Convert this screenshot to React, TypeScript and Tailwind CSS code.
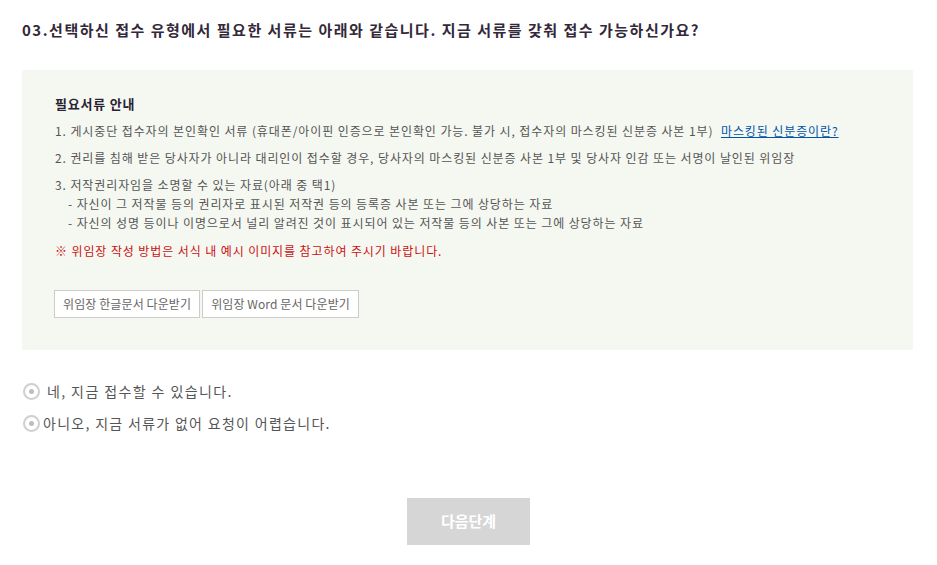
import React from "react";

const font = { fontFamily: '"Noto Sans CJK KR", "Noto Sans", sans-serif' };

function Radio({ label, gap, track }: { label: string; gap: string; track: string }) {
  return (
    <div className={`flex items-center ${gap}`}>
      <span className="flex h-[17px] w-[17px] items-center justify-center rounded-full border-2 border-[#cfcfcf] bg-white">
        <span className="h-[5px] w-[5px] rounded-full bg-[#bdbdbd]" />
      </span>
      <span className={`text-[14px] text-[#555] ${track}`}>{label}</span>
    </div>
  );
}

export default function App() {
  return (
    <div className="w-[937px] h-[565px] bg-white" style={font}>
      <div className="px-[22px] pt-[19px]">
        <h2 className="text-[15px] font-bold leading-[22px] text-[#33293a] tracking-[1.5px]">
          03.선택하신 접수 유형에서 필요한 서류는 아래와 같습니다. 지금 서류를 갖춰 접수 가능하신가요?
        </h2>
        <div className="mt-[29px] h-[280px] w-[891px] bg-[#f4f8f1] pl-[33px] pt-[25px]">
          <div className="text-[13px] font-bold leading-[18px] text-[#2a2233] tracking-[0.8px]">필요서류 안내</div>
          <div className="mt-[9px] text-[12px] leading-[18px] text-[#555] tracking-[0.9px]">
            <p>
              1. 게시중단 접수자의 본인확인 서류 (휴대폰/아이핀 인증으로 본인확인 가능. 불가 시, 접수자의 마스킹된 신분증 사본 1부){" "}
              <a className="ml-[4px] text-[#0055aa] underline">마스킹된 신분증이란?</a>
            </p>
            <p className="mt-[9px]">
              2. 권리를 침해 받은 당사자가 아니라 대리인이 접수할 경우, 당사자의 마스킹된 신분증 사본 1부 및 당사자 인감 또는 서명이 날인된 위임장
            </p>
            <p className="mt-[9px]">3. 저작권리자임을 소명할 수 있는 자료(아래 중 택1)</p>
            <p className="mt-[1px] pl-[13px]">- 자신이 그 저작물 등의 권리자로 표시된 저작권 등의 등록증 사본 또는 그에 상당하는 자료</p>
            <p className="mt-[1px] pl-[13px]">- 자신의 성명 등이나 이명으로서 널리 알려진 것이 표시되어 있는 저작물 등의 사본 또는 그에 상당하는 자료</p>
            <p className="mt-[10px] text-[#cc1111]">※ 위임장 작성 방법은 서식 내 예시 이미지를 참고하여 주시기 바랍니다.</p>
          </div>
          <div className="mt-[30px] -ml-[1px] flex gap-[2px]">
            <button className="h-[28px] border border-[#cccccc] bg-white px-[8px] text-[12px] text-[#666] tracking-[0.1px]">위임장 한글문서 다운받기</button>
            <button className="h-[28px] border border-[#cccccc] bg-white px-[8px] text-[12px] text-[#666] tracking-[0.1px]">위임장 Word 문서 다운받기</button>
          </div>
        </div>
        <div className="mt-[31px] flex flex-col gap-[11px] pl-[1px]">
          <Radio label="네, 지금 접수할 수 있습니다." gap="gap-[7px]" track="tracking-[1.4px]" />
          <Radio label="아니오, 지금 서류가 없어 요청이 어렵습니다." gap="gap-[3px]" track="tracking-[1.3px]" />
        </div>
        <div className="mt-[64px] flex justify-center">
          <button className="h-[47px] w-[123px] bg-[#d6d6d6] text-[15px] font-bold text-white">다음단계</button>
        </div>
      </div>
    </div>
  );
}
